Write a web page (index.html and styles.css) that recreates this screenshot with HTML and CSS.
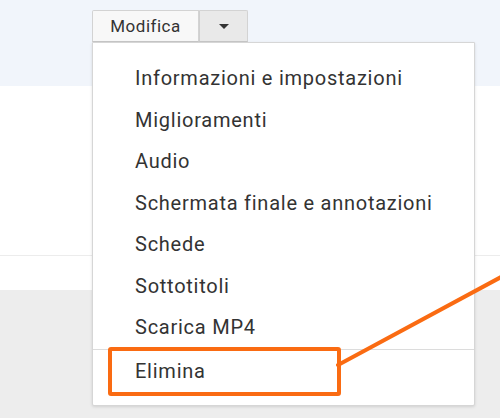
FILE: index.html
```html
<!DOCTYPE html>
<html lang="it">
<head>
<meta charset="utf-8">
<link rel="stylesheet" href="styles.css">
</head>
<body>
<div class="page">
  <header class="band">
    <div class="split">
      <button class="split-main">Modifica</button>
      <button class="split-arrow"><span class="caret"></span></button>
      <ul class="menu">
        <li class="item">Informazioni e impostazioni</li>
        <li class="item">Miglioramenti</li>
        <li class="item">Audio</li>
        <li class="item">Schermata finale e annotazioni</li>
        <li class="item">Schede</li>
        <li class="item">Sottotitoli</li>
        <li class="item">Scarica MP4</li>
        <li class="sep"></li>
        <li class="item item-del">Elimina<span class="highlight"></span></li>
      </ul>
    </div>
  </header>
  <section class="white">
    <div class="white-top"></div>
    <div class="white-bottom"></div>
  </section>
  <section class="gray"></section>
  <svg class="pointer" width="500" height="418" viewBox="0 0 500 418">
    <line x1="338" y1="365" x2="503" y2="276" stroke="#fa6b12" stroke-width="4" stroke-linecap="round"/>
  </svg>
</div>
</body>
</html>
```

FILE: styles.css
```css
* { box-sizing: border-box; }
html, body { margin: 0; padding: 0; }
body {
  width: 500px;
  height: 418px;
  overflow: hidden;
  font-family: Roboto, "Liberation Sans", Arial, sans-serif;
  color: #333;
  background: #ededed;
}
.page { position: relative; width: 500px; height: 418px; }

.band {
  height: 86px;
  background: #f1f5fb;
  padding: 10px 0 0 92px;
}
.split { position: relative; display: flex; width: 156px; height: 32px; }
.split-main, .split-arrow {
  font-family: inherit;
  margin: 0;
  height: 32px;
  border: 1px solid #d3d3d3;
  border-bottom-color: #c8c8c8;
  color: #333;
  cursor: pointer;
}
.split-main {
  width: 107px;
  background: #f8f8f8;
  font-size: 17px;
  letter-spacing: 0.5px;
  padding: 0 0 1px 0;
  border-radius: 2px 0 0 0;
}
.split-arrow {
  width: 49px;
  background: #e9e9e9;
  border-left: 1px solid #cfcfcf;
  border-radius: 0 2px 0 0;
  display: flex;
  align-items: center;
  justify-content: center;
  padding: 0;
}
.caret {
  width: 0; height: 0;
  border-left: 5px solid transparent;
  border-right: 5px solid transparent;
  border-top: 5px solid #333;
  margin-top: 1px;
}

.menu {
  position: absolute;
  top: 32px;
  left: 0;
  width: 383px;
  margin: 0;
  padding: 15px 0 13px 0;
  list-style: none;
  background: #fff;
  border: 1px solid #d6d6d6;
  border-radius: 0 0 2px 2px;
  box-shadow: 0 1px 3px rgba(0,0,0,0.12);
  z-index: 2;
}
.item {
  position: relative;
  height: 41.5px;
  line-height: 41.5px;
  padding-left: 42px;
  font-size: 20px;
  letter-spacing: 0.75px;
  color: #333;
  white-space: nowrap;
}
.sep { height: 1px; background: #dcdcdc; margin: 0; }
.item-del { height: 42px; line-height: 42px; }
.highlight {
  position: absolute;
  left: 15px;
  top: -3px;
  width: 233px;
  height: 49px;
  border: 4px solid #fa6b12;
  border-radius: 3px;
}

.white { background: #fff; height: 204px; }
.white-top { height: 170px; border-bottom: 1px solid #ececec; }
.white-bottom { height: 34px; }
.gray { height: 128px; background: #ededed; }

.pointer { position: absolute; left: 0; top: 0; z-index: 3; pointer-events: none; }
```
